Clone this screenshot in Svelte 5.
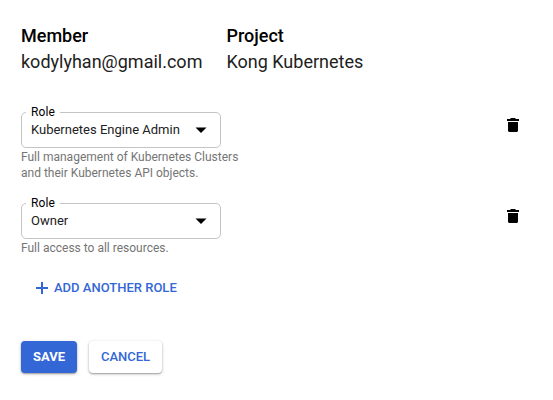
<script>
  const details = [
    { label: 'Member', value: 'kodylyhan@gmail.com' },
    { label: 'Project', value: 'Kong Kubernetes' },
  ];
  const roles = [
    {
      name: 'Kubernetes Engine Admin',
      hint: 'Full management of Kubernetes Clusters and their Kubernetes API objects.',
    },
    { name: 'Owner', hint: 'Full access to all resources.' },
  ];
</script>

<main>
  <header>
    {#each details as item}
      <div class="detail">
        <h2>{item.label}</h2>
        <p>{item.value}</p>
      </div>
    {/each}
  </header>

  <section class="roles">
    {#each roles as role}
      <div class="row">
        <div class="field">
          <div class="select" role="button" tabindex="0">
            <span class="legend">Role</span>
            <span class="value">{role.name}</span>
            <svg class="caret" width="12" height="6" viewBox="0 0 12 6"><path d="M.5.5h11L6 6z" /></svg>
          </div>
          <p class="hint">{role.hint}</p>
        </div>
        <button class="trash" aria-label="Delete role">
          <svg width="12" height="14" viewBox="0 0 12 14">
            <path d="M0 1h3l1-1h4l1 1h3v2H0zM1 4h10v9l-1 1H2l-1-1z" />
          </svg>
        </button>
      </div>
    {/each}
  </section>

  <button class="add">
    <svg width="12" height="12" viewBox="0 0 12 12"><path d="M5 0h2v5h5v2H7v5H5V7H0V5h5z" /></svg>
    <span>ADD ANOTHER ROLE</span>
  </button>

  <footer>
    <button class="btn save">SAVE</button>
    <button class="btn cancel">CANCEL</button>
  </footer>
</main>

<style>
  :global(body) {
    background: #fff;
  }
  main {
    box-sizing: border-box;
    width: 553px;
    height: 400px;
    padding: 23px 34px 0 21px;
    overflow: hidden;
    font-family: Roboto, sans-serif;
    color: #212121;
  }
  h2,
  p {
    margin: 0;
  }
  button {
    border: 0;
    padding: 0;
    background: none;
    font-family: inherit;
  }
  svg {
    display: block;
    fill: currentColor;
  }
  header {
    display: flex;
    gap: 24px;
    height: 89px;
  }
  .detail {
    font-size: 18px;
    line-height: 26px;
    white-space: nowrap;
  }
  h2 {
    font-size: 18px;
    font-weight: 500;
    color: #000;
  }
  .roles {
    display: flex;
    flex-direction: column;
    gap: 22px;
  }
  .row {
    display: flex;
    justify-content: space-between;
    align-items: flex-start;
  }
  .field {
    width: 225px;
  }
  .select {
    position: relative;
    box-sizing: border-box;
    display: flex;
    align-items: center;
    justify-content: space-between;
    width: 200px;
    height: 36px;
    padding: 0 13px 0 9px;
    border: 1px solid #c4c4c4;
    border-radius: 5px;
    font-size: 13px;
  }
  .value {
    padding-bottom: 2px;
  }
  .legend {
    position: absolute;
    top: -8px;
    left: 4px;
    padding: 0 5px;
    background: #fff;
    font-size: 12px;
    line-height: 14px;
    letter-spacing: 0.1px;
    color: #000;
  }
  .caret {
    color: #000;
  }
  .hint {
    padding-top: 1px;
    font-size: 12px;
    line-height: 16px;
    color: #757575;
  }
  .trash {
    margin-top: 6px;
    color: #000;
  }
  .add {
    display: flex;
    align-items: center;
    gap: 6px;
    height: 16px;
    margin: 24px 0 0 15px;
    color: #3367d6;
    font-size: 13px;
    font-weight: 500;
  }
  .add span {
    padding-bottom: 2px;
  }
  footer {
    display: flex;
    gap: 12px;
    margin-top: 45px;
  }
  .btn {
    height: 32px;
    padding-bottom: 2px;
    border-radius: 4px;
    font-size: 13px;
    font-weight: 500;
    box-shadow: 0 1px 3px rgba(0, 0, 0, 0.3), 0 1px 1px rgba(0, 0, 0, 0.16);
  }
  .save {
    width: 56px;
    background: #3367d6;
    color: #fff;
    font-weight: 700;
  }
  .cancel {
    width: 73px;
    color: #3367d6;
  }
</style>
